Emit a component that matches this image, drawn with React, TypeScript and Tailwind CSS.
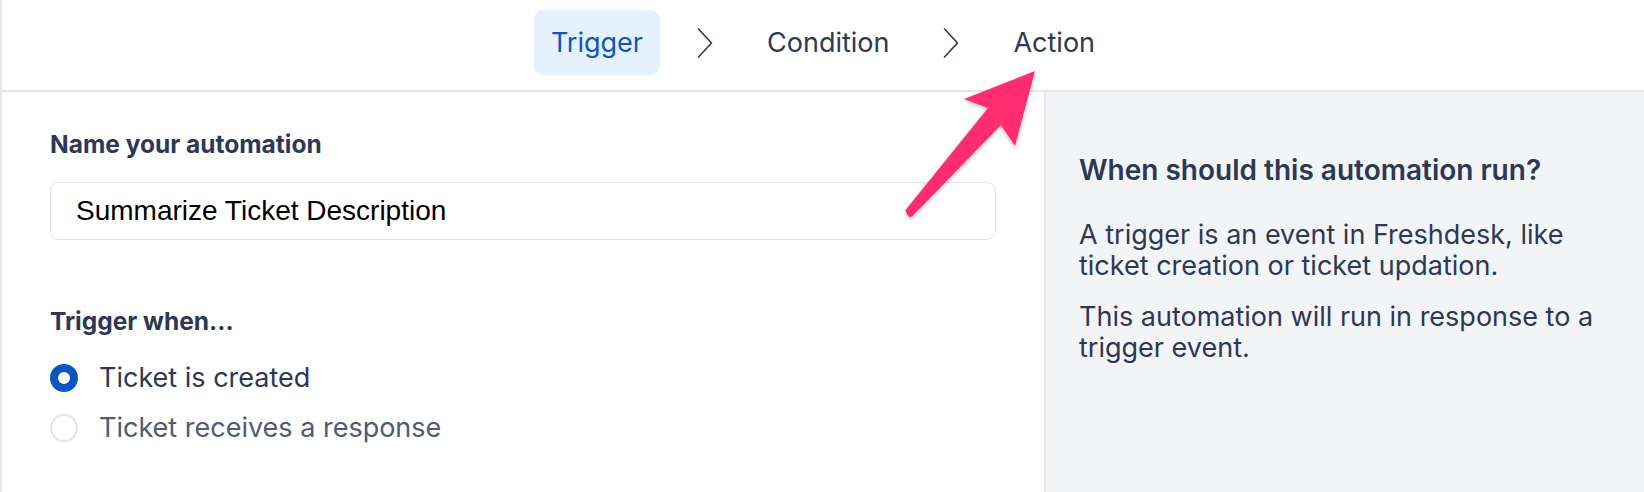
import { useState } from 'react'

type Step = {
  id: string
  label: string
}

const steps: Step[] = [
  { id: 'trigger', label: 'Trigger' },
  { id: 'condition', label: 'Condition' },
  { id: 'action', label: 'Action' },
]

function Chevron() {
  return (
    <svg className="w-[16px] h-[30px] shrink-0" viewBox="0 0 16 30" fill="none">
      <path d="M1.5 1 L14.5 15 L1.5 29" stroke="#2b3856" strokeWidth={1.6} strokeLinecap="round" strokeLinejoin="round" />
    </svg>
  )
}

function Radio({ checked, label, onSelect }: { checked: boolean; label: string; onSelect: () => void }) {
  return (
    <button type="button" onClick={onSelect} className="flex items-center h-[36px] gap-[21px] text-left">
      {checked ? (
        <span className="w-[28px] h-[28px] rounded-full border-[8px] border-[#0a56c4] bg-white shrink-0" />
      ) : (
        <span className="w-[28px] h-[28px] rounded-full border-2 border-[#e3e5ea] bg-white shrink-0" />
      )}
      <span className={checked ? 'text-[27px] text-[#2b3856]' : 'text-[27px] text-[#4d5b76]'}>{label}</span>
    </button>
  )
}

export default function App() {
  const [active] = useState('trigger')
  const [trigger, setTrigger] = useState('created')
  const [name, setName] = useState('Summarize Ticket Description')

  return (
    <div className="relative w-[1644px] h-[492px] overflow-hidden bg-white border-l-2 border-[#e4e6eb] font-['Inter',sans-serif] text-[#2b3856]">
      <header className="h-[92px] border-b-2 border-[#e4e6eb] flex justify-center pt-[10px]">
        <nav className="flex items-center h-[65px] gap-[37px]">
          {steps.map((step, i) => (
            <div key={step.id} className="flex items-center gap-[37px]">
              {i > 0 && <Chevron />}
              <span
                className={
                  step.id === active
                    ? 'h-[65px] px-[17px] pt-[2px] rounded-[9px] flex items-center text-[27px] bg-[#e6f1fe] text-[#0a56c4]'
                    : 'h-[65px] px-[17px] pt-[2px] rounded-[9px] flex items-center text-[27px] text-[#2b3856]'
                }
              >
                {step.label}
              </span>
            </div>
          ))}
        </nav>
      </header>

      <div className="flex h-[400px]">
        <section className="w-[1042px] shrink-0 px-[48px] pt-[37px]">
          <label className="block text-[24.5px] leading-[30px] font-bold">Name your automation</label>
          <input
            value={name}
            onChange={(e) => setName(e.target.value)}
            className="mt-[23px] w-full h-[58px] border-[1.5px] border-[#e1e4ea] rounded-[9px] px-[25px] text-[28px] text-black font-['Liberation_Sans',Arial,sans-serif] outline-none"
          />

          <p className="mt-[66px] text-[24.5px] leading-[30px] font-bold">Trigger when...</p>
          <div className="mt-[24px] flex flex-col gap-[14px]">
            <Radio checked={trigger === 'created'} label="Ticket is created" onSelect={() => setTrigger('created')} />
            <Radio checked={trigger === 'response'} label="Ticket receives a response" onSelect={() => setTrigger('response')} />
          </div>
        </section>

        <aside className="flex-1 border-l-2 border-[#e4e6eb] bg-[#f3f4f6] pl-[33px] pr-[33px] pt-[60px]">
          <h2 className="text-[28px] leading-[36px] font-semibold">When should this automation run?</h2>
          <p className="mt-[31px] text-[27px] leading-[31px]">A trigger is an event in Freshdesk, like ticket creation or ticket updation.</p>
          <p className="mt-[20px] text-[27px] leading-[31px]">This automation will run in response to a trigger event.</p>
        </aside>
      </div>

      {/* annotation arrow */}
      <svg
        className="absolute top-0 left-[-2px] pointer-events-none drop-shadow-[0_2px_2px_rgba(0,0,0,0.25)]"
        width={1644}
        height={492}
        viewBox="0 0 1644 492"
      >
        <path
          d="M1035 71 L1015 146 L1001 125 L912.5 216 Q908 219.5 905.5 210 L988 108 L964 99 Z"
          fill="#ff2d6f"
          strokeLinejoin="round"
        />
      </svg>
    </div>
  )
}
